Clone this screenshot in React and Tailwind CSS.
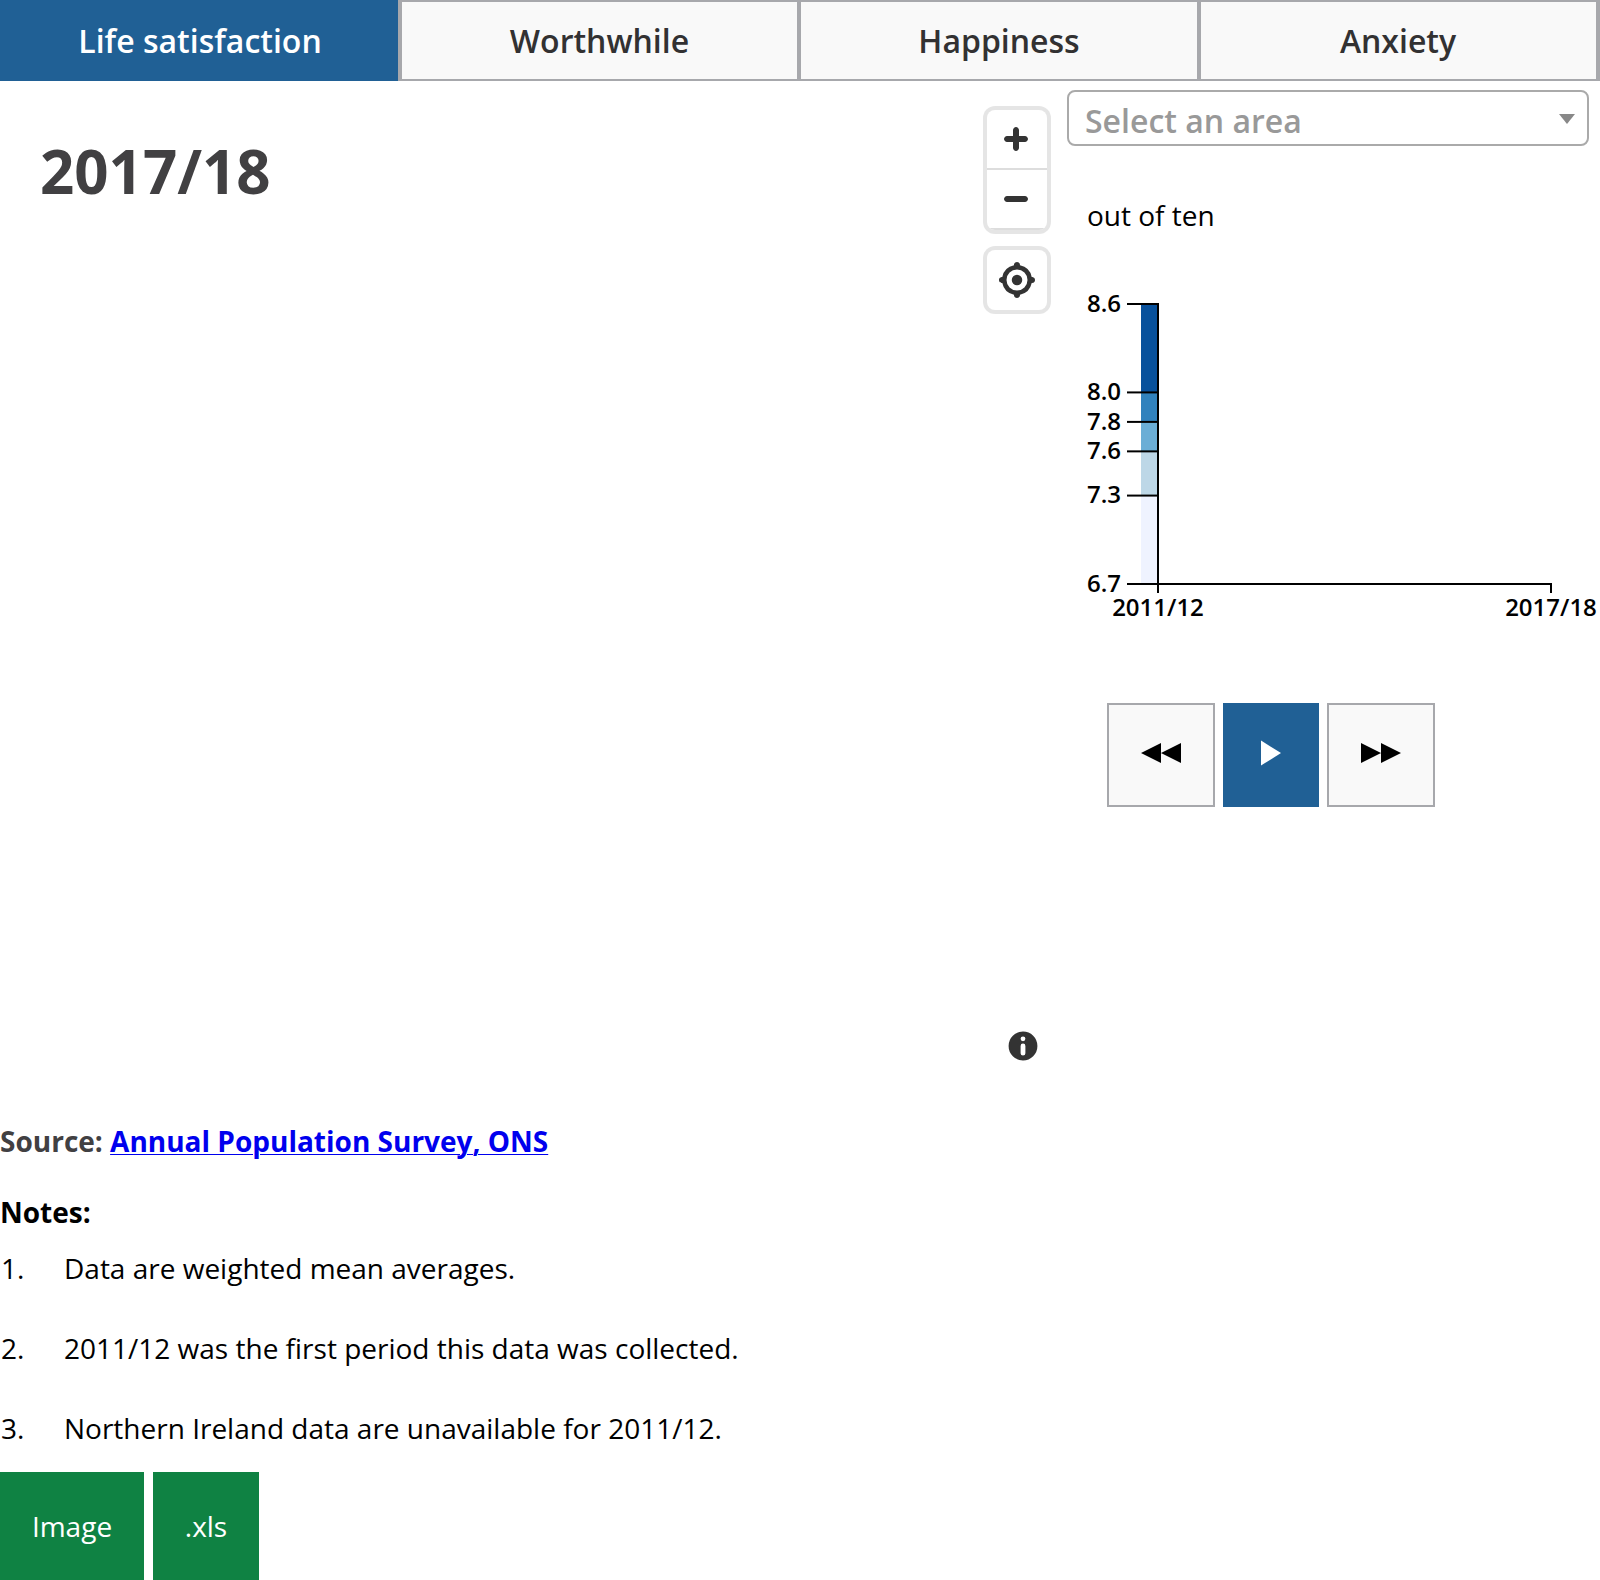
const tabs = [
  { label: "Life satisfaction", className: "w-[398px] pl-[2px] bg-[#206095] text-white" },
  { label: "Worthwhile", className: "w-[399px] bg-[#f9f9f9] text-[#323132] border-l-4 border-y-2 border-[#a7a8ac]" },
  { label: "Happiness", className: "w-[400px] bg-[#f9f9f9] text-[#323132] border-l-4 border-y-2 border-[#a7a8ac]" },
  { label: "Anxiety", className: "w-[403px] pr-px bg-[#f9f9f9] text-[#323132] border-x-4 border-y-2 border-[#a7a8ac]" },
];

const breaks = [8.6, 8.0, 7.8, 7.6, 7.3, 6.7];
const bands = ["#08519c", "#3182bd", "#6baed6", "#bdd7e7", "#eff3ff"];
const scaleY = (v) => 19 + ((8.6 - v) / 1.9) * 280;

const notes = [
  "Data are weighted mean averages.",
  "2011/12 was the first period this data was collected.",
  "Northern Ireland data are unavailable for 2011/12.",
];

function Tabs() {
  return (
    <nav className="flex h-[81px]">
      {tabs.map((t) => (
        <button key={t.label} className={`flex items-center justify-center text-[32px] leading-[44px] font-semibold ${t.className}`}>
          {t.label}
        </button>
      ))}
    </nav>
  );
}

function MapPanel() {
  return (
    <section className="flex h-[1025px] w-[1067px] justify-between">
      <h1 className="mt-[49px] ml-10 text-[60px] leading-[82px] font-bold text-[#414042]">2017/18</h1>
      <div className="flex w-[60px] flex-col pt-[29px] mr-5">
        <div className="h-[120px] overflow-hidden rounded-lg shadow-[0_0_0_4px_rgba(0,0,0,0.1)]">
          <button className="block h-[60px] w-[60px] border-b-2 border-[#ddd]">
            <svg width="58" height="58" viewBox="0 0 29 29" fill="#333">
              <path d="M14.5 8.5c-.75 0-1.5.75-1.5 1.5v3h-3c-.75 0-1.5.75-1.5 1.5S9.25 16 10 16h3v3c0 .75.75 1.5 1.5 1.5S16 19.75 16 19v-3h3c.75 0 1.5-.75 1.5-1.5S19.75 13 19 13h-3v-3c0-.75-.75-1.5-1.5-1.5z" />
            </svg>
          </button>
          <button className="block h-[60px] w-[60px] border-b-2 border-[#ddd]">
            <svg width="58" height="58" viewBox="0 0 29 29" fill="#333">
              <path d="M10 13c-.75 0-1.5.75-1.5 1.5S9.25 16 10 16h9c.75 0 1.5-.75 1.5-1.5S19.75 13 19 13h-9z" />
            </svg>
          </button>
        </div>
        <button className="mt-5 h-[60px] w-[60px] rounded-lg shadow-[0_0_0_4px_rgba(0,0,0,0.1)]">
          <svg width="60" height="60" viewBox="0 0 20 20" fill="#333">
            <path d="M10 4C9 4 9 5 9 5v.1A5 5 0 0 0 5.1 9H5s-1 0-1 1 1 1 1 1h.1A5 5 0 0 0 9 14.9v.1s0 1 1 1 1-1 1-1v-.1a5 5 0 0 0 3.9-3.9h.1s1 0 1-1-1-1-1-1h-.1A5 5 0 0 0 11 5.1V5s0-1-1-1zm0 2.5a3.5 3.5 0 1 1 0 7 3.5 3.5 0 1 1 0-7z" />
            <circle cx="10" cy="10" r="1.75" />
          </svg>
        </button>
        <button className="mt-auto mb-9 ml-3 h-12 w-12">
          <svg width="48" height="48" viewBox="0 0 20 20" fill="#333" fillRule="evenodd">
            <path d="M4 10a6 6 0 1 0 12 0 6 6 0 1 0-12 0m5-3a1 1 0 1 0 2 0 1 1 0 1 0-2 0m0 3a1 1 0 1 1 2 0v3a1 1 0 1 1-2 0" />
          </svg>
        </button>
      </div>
    </section>
  );
}

function Chart() {
  return (
    <svg width="533" height="340" viewBox="0 0 533 340" className="mt-[51px] block text-[24px] font-semibold">
      {bands.map((c, i) => (
        <rect key={c} x="74" width="17" y={scaleY(breaks[i])} height={scaleY(breaks[i + 1]) - scaleY(breaks[i])} fill={c} />
      ))}
      <g stroke="#000" strokeWidth="2" fill="none">
        {breaks.map((b) => (
          <line key={b} x1="60" x2="91" y1={scaleY(b)} y2={scaleY(b)} />
        ))}
        <path d="M91 18V308M90 299H484V308" />
      </g>
      {breaks.map((b) => (
        <text key={b} x="54" y={scaleY(b) + 7.7} textAnchor="end">
          {b.toFixed(1)}
        </text>
      ))}
      <text x="91" y="331" textAnchor="middle">2011/12</text>
      <text x="484" y="331" textAnchor="middle">2017/18</text>
    </svg>
  );
}

function SidePanel() {
  return (
    <section className="w-[533px]">
      <button className="mt-[9px] flex h-14 w-[522px] items-center justify-between rounded-lg border-2 border-[#aaa] pr-3 pl-4">
        <span className="mt-1.5 text-[32px] leading-[44px] font-semibold text-[#999]">Select an area</span>
        <svg width="16" height="10" viewBox="0 0 16 10" className="mt-0.5">
          <path d="M0 0H16L8 10z" fill="#888" />
        </svg>
      </button>
      <p className="mt-[50px] ml-5 text-[28px] leading-[38px]">out of ten</p>
      <Chart />
      <div className="mt-[78px] ml-10 flex h-[104px] gap-2">
        <button className="flex w-[108px] items-center justify-center border-2 border-[#a7a8ac] bg-[#f9f9f9]">
          <svg width="40" height="20" viewBox="0 0 40 20" className="mb-1">
            <path d="M0 10L20 0V20zM20 10L40 0V20z" />
          </svg>
        </button>
        <button className="flex w-24 items-center justify-center bg-[#206095]">
          <svg width="20" height="26" viewBox="0 0 20 26" className="mb-1">
            <path d="M0 .5L20 13L0 25.5z" fill="#fff" />
          </svg>
        </button>
        <button className="flex w-[108px] items-center justify-center border-2 border-[#a7a8ac] bg-[#f9f9f9]">
          <svg width="40" height="20" viewBox="0 0 40 20" className="mb-1">
            <path d="M0 0L20 10L0 20zM20 0L40 10L20 20z" />
          </svg>
        </button>
      </div>
    </section>
  );
}

export default function App() {
  return (
    <div className="h-[1580px] w-[1600px] overflow-hidden bg-white font-['Open_Sans',sans-serif] text-black">
      <Tabs />
      <main className="flex h-[1025px]">
        <MapPanel />
        <SidePanel />
      </main>
      <footer className="text-[28px] leading-[38px]">
        <p className="pt-4 font-bold text-[#414042]">
          Source:{" "}
          <a className="text-[#0000ee] underline decoration-1 underline-offset-2" href="#source">Annual Population Survey, ONS</a>
        </p>
        <h2 className="mt-[33px] font-bold">Notes:</h2>
        <ol className="mt-[18px] flex flex-col gap-[42px]">
          {notes.map((n, i) => (
            <li key={n} className="flex pl-px">
              <span className="w-[63px]">{i + 1}.</span>
              {n}
            </li>
          ))}
        </ol>
        <div className="mt-[25px] flex h-[108px] gap-[9px] text-white">
          <button className="w-36 bg-[#0f8243]">Image</button>
          <button className="w-[106px] bg-[#0f8243]">.xls</button>
        </div>
      </footer>
    </div>
  );
}
